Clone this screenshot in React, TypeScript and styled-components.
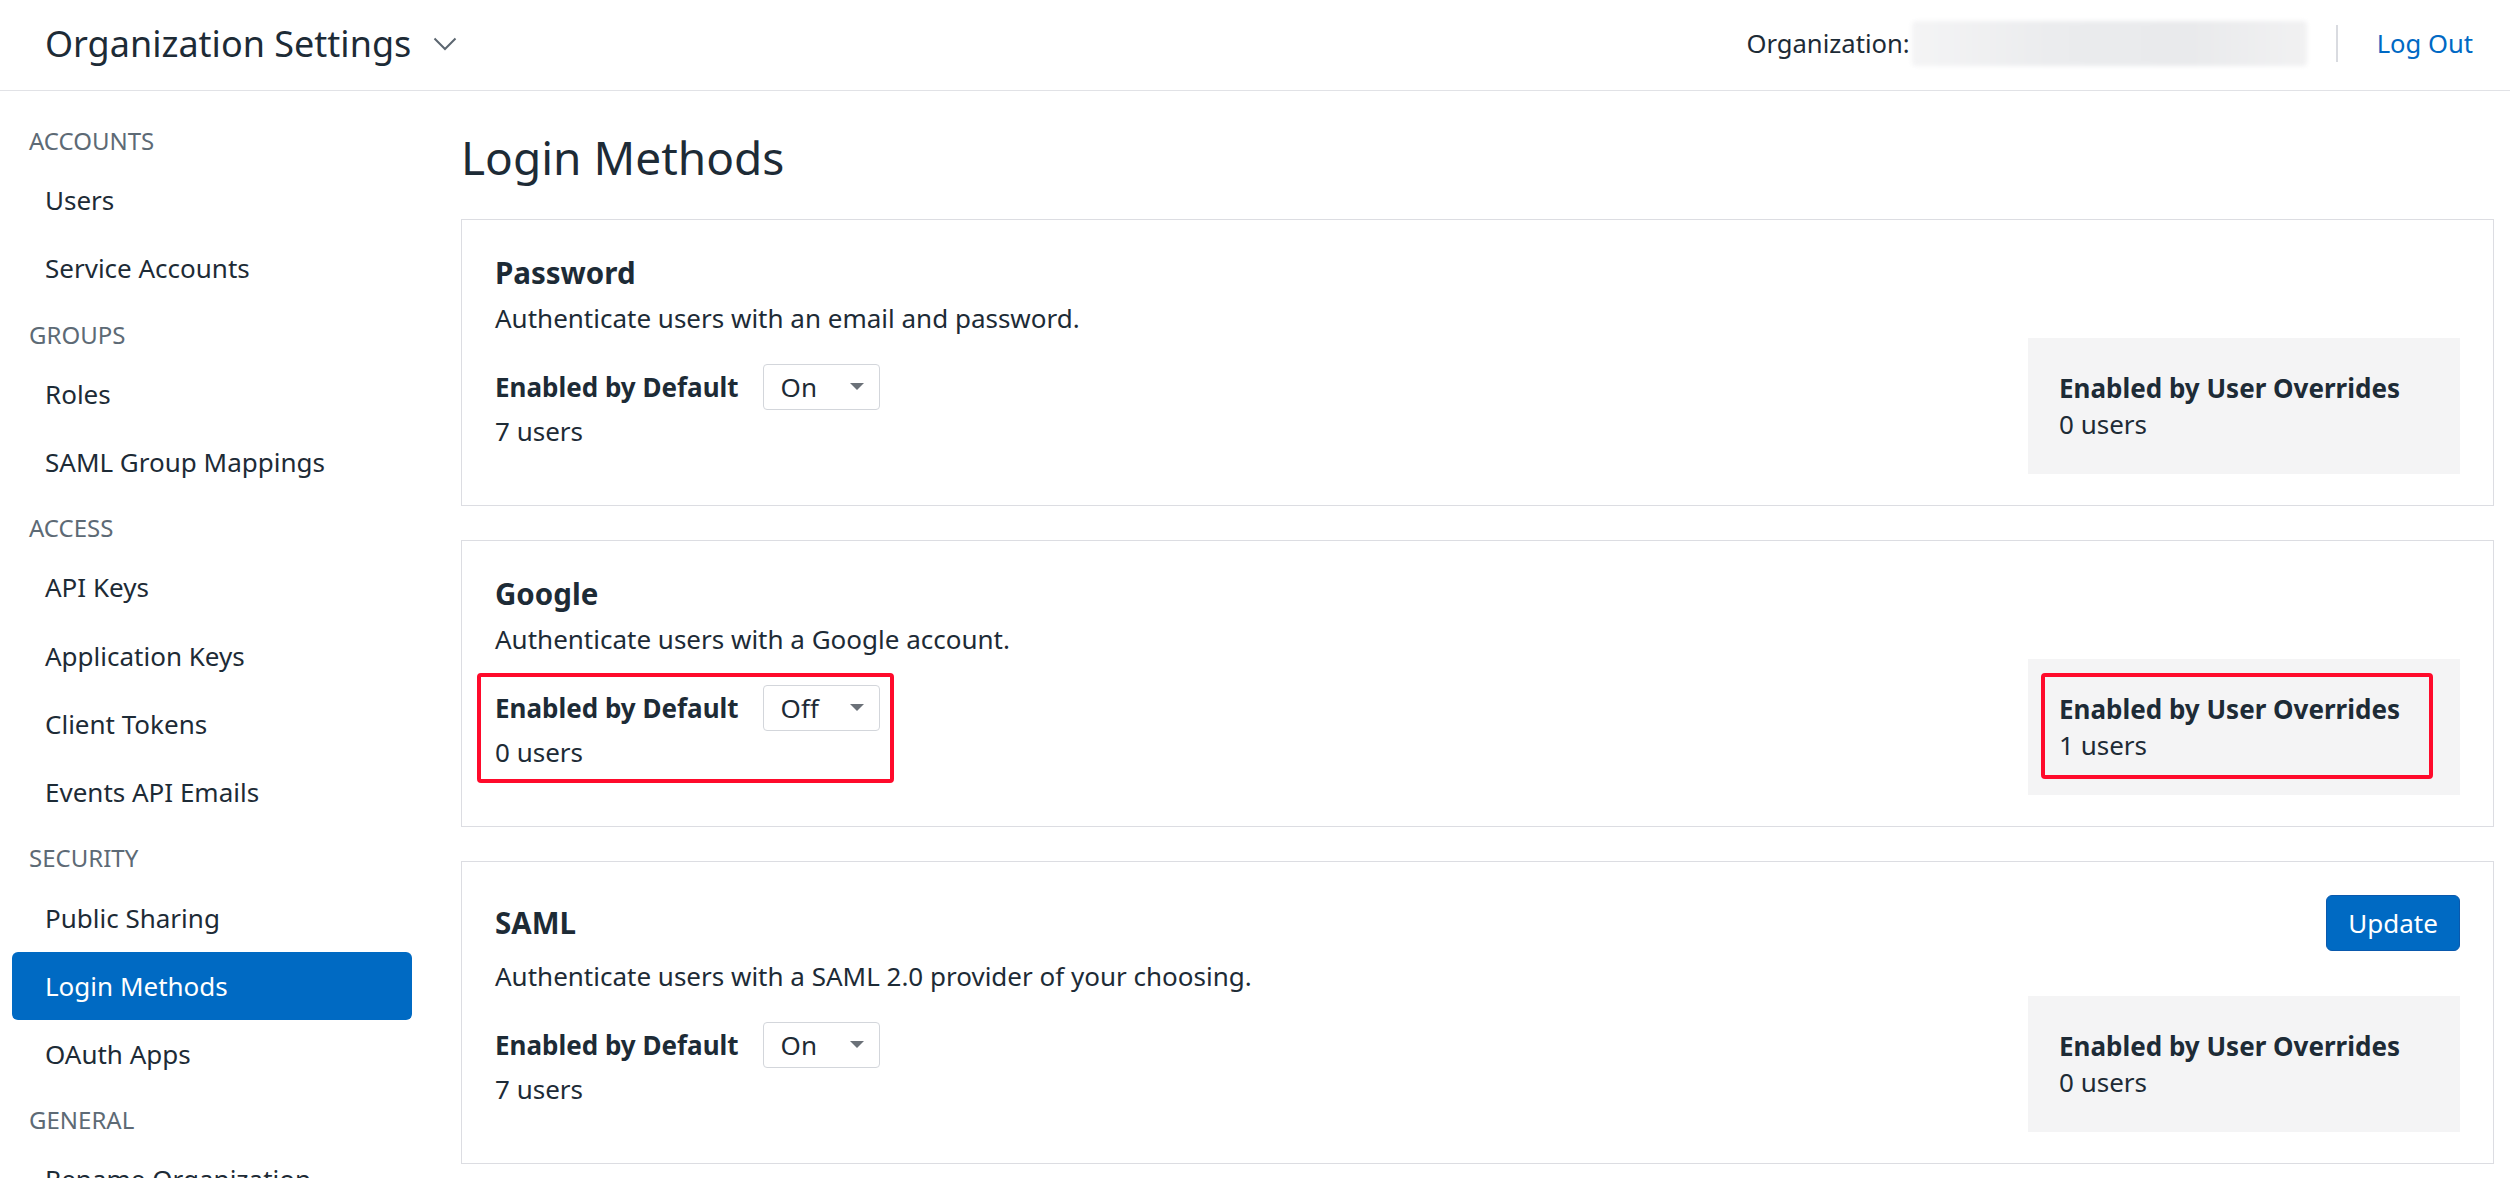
import styled, { createGlobalStyle, css } from 'styled-components';

const GlobalStyle = createGlobalStyle`
  html, body {
    margin: 0;
    padding: 0;
  }
  body {
    font-family: 'Noto Sans', 'Open Sans', sans-serif;
    color: #1d2b36;
    background: #ffffff;
    overflow: hidden;
  }
  * {
    box-sizing: border-box;
  }
`;

const Page = styled.div`
  width: 2510px;
  height: 1178px;
  display: flex;
  flex-direction: column;
  overflow: hidden;
`;

const TopBar = styled.header`
  flex: none;
  height: 91px;
  display: flex;
  align-items: center;
  justify-content: space-between;
  padding: 0 37px 3px 45px;
  border-bottom: 1px solid #e1e2e6;
`;

const AppTitle = styled.div`
  display: flex;
  align-items: center;
  gap: 22px;
  font-size: 36px;
  line-height: 48px;
`;

const OrgInfo = styled.div`
  display: flex;
  align-items: center;
  font-size: 25.6px;
  line-height: 36px;
`;

const Redacted = styled.div`
  width: 395px;
  height: 45px;
  margin-left: 2px;
  border-radius: 4px;
  background: linear-gradient(90deg, #f4f4f5 0%, #ebecee 35%, #e9eaec 70%, #f1f1f2 100%);
  filter: blur(2px);
`;

const Divider = styled.div`
  width: 2px;
  height: 37px;
  margin: 0 39px 0 29px;
  background: #d9dbe0;
`;

const LogOut = styled.a`
  color: #0069c4;
  text-decoration: none;
`;

const Body = styled.div`
  flex: 1;
  display: flex;
  min-height: 0;
`;

const Sidebar = styled.nav`
  flex: none;
  width: 424px;
  padding: 18px 12px 0;
`;

const SectionLabel = styled.div`
  padding: 17px 0 10px 17px;
  font-size: 24px;
  line-height: 30px;
  color: #5d6a75;
  text-transform: uppercase;
`;

const NavItem = styled.div<{ $active?: boolean }>`
  height: 68.3px;
  display: flex;
  align-items: center;
  padding-left: 33px;
  font-size: 26px;
  border-radius: 6px;
  ${(p) =>
    p.$active &&
    css`
      background: #006ac3;
      color: #ffffff;
    `}
`;

const Main = styled.main`
  flex: 1;
  padding: 40px 16px 0 37px;
`;

const PageTitle = styled.h1`
  margin: 0 0 36px;
  font-size: 46px;
  line-height: 52px;
  font-weight: 400;
`;

const CardList = styled.div`
  display: flex;
  flex-direction: column;
  gap: 34px;
`;

const Card = styled.section`
  border: 1px solid #dcdde2;
  padding: 33px 33px 31px 33px;
`;

const CardHead = styled.div`
  display: flex;
  align-items: center;
  justify-content: space-between;
  margin-bottom: 7px;
`;

const CardTitle = styled.h2`
  margin: 0;
  font-size: 29.5px;
  line-height: 40px;
  font-weight: 700;
`;

const Description = styled.div`
  margin-bottom: 2px;
  font-size: 26px;
  line-height: 36px;
`;

const CardBody = styled.div`
  display: flex;
  align-items: center;
  justify-content: space-between;
`;

const highlight = css<{ $inset: string }>`
  &::after {
    content: '';
    position: absolute;
    inset: ${(p) => p.$inset};
    border: 4px solid #ff0a2b;
    border-radius: 4px;
  }
`;

const DefaultBlock = styled.div<{ $highlight?: boolean; $inset: string }>`
  position: relative;
  font-size: 26px;
  line-height: 36px;
  ${(p) => p.$highlight && highlight}
`;

const SettingRow = styled.div`
  display: flex;
  align-items: center;
  gap: 24px;
  margin-bottom: 3px;
`;

const Label = styled.div`
  font-weight: 700;
`;

const Select = styled.div`
  width: 117px;
  height: 46px;
  display: flex;
  align-items: center;
  justify-content: space-between;
  padding: 0 15px 0 17px;
  border: 1px solid #d3d6db;
  border-radius: 4px;
`;

const Caret = styled.span`
  width: 0;
  height: 0;
  border-left: 7px solid transparent;
  border-right: 7px solid transparent;
  border-top: 7px solid #6b7178;
`;

const OverrideBox = styled.div<{ $highlight?: boolean; $inset: string }>`
  position: relative;
  width: 432px;
  height: 136px;
  display: flex;
  flex-direction: column;
  justify-content: center;
  padding: 0 31px;
  background: #f4f4f5;
  font-size: 26px;
  line-height: 36px;
  ${(p) => p.$highlight && highlight}
`;

const UpdateButton = styled.button`
  width: 134px;
  height: 56px;
  border: 1px solid #0a59ad;
  border-radius: 6px;
  background: #006ac3;
  color: #ffffff;
  font-family: inherit;
  font-size: 26px;
`;

const ChevronDown = () => (
  <svg width="24" height="14" viewBox="0 0 24 14" fill="none">
    <polyline points="1.5,1.5 12,12 22.5,1.5" stroke="#5c6670" strokeWidth="2" />
  </svg>
);

type Section = { label: string; items: string[] };

const sections: Section[] = [
  { label: 'Accounts', items: ['Users', 'Service Accounts'] },
  { label: 'Groups', items: ['Roles', 'SAML Group Mappings'] },
  { label: 'Access', items: ['API Keys', 'Application Keys', 'Client Tokens', 'Events API Emails'] },
  { label: 'Security', items: ['Public Sharing', 'Login Methods', 'OAuth Apps'] },
  { label: 'General', items: ['Rename Organization'] },
];

type Method = {
  name: string;
  description: string;
  value: 'On' | 'Off';
  defaultUsers: number;
  overrideUsers: number;
  highlight?: boolean;
  action?: string;
};

const methods: Method[] = [
  {
    name: 'Password',
    description: 'Authenticate users with an email and password.',
    value: 'On',
    defaultUsers: 7,
    overrideUsers: 0,
  },
  {
    name: 'Google',
    description: 'Authenticate users with a Google account.',
    value: 'Off',
    defaultUsers: 0,
    overrideUsers: 1,
    highlight: true,
  },
  {
    name: 'SAML',
    description: 'Authenticate users with a SAML 2.0 provider of your choosing.',
    value: 'On',
    defaultUsers: 7,
    overrideUsers: 0,
    action: 'Update',
  },
];

const MethodCard = ({ method }: { method: Method }) => (
  <Card>
    <CardHead>
      <CardTitle>{method.name}</CardTitle>
      {method.action && <UpdateButton>{method.action}</UpdateButton>}
    </CardHead>
    <Description>{method.description}</Description>
    <CardBody>
      <DefaultBlock $highlight={method.highlight} $inset="-12px -14px -13px -18px">
        <SettingRow>
          <Label>Enabled by Default</Label>
          <Select>
            <span>{method.value}</span>
            <Caret />
          </Select>
        </SettingRow>
        <div>{method.defaultUsers} users</div>
      </DefaultBlock>
      <OverrideBox $highlight={method.highlight} $inset="14px 27px 16px 13px">
        <Label>Enabled by User Overrides</Label>
        <div>{method.overrideUsers} users</div>
      </OverrideBox>
    </CardBody>
  </Card>
);

export default function App() {
  return (
    <Page>
      <GlobalStyle />
      <TopBar>
        <AppTitle>
          Organization Settings
          <ChevronDown />
        </AppTitle>
        <OrgInfo>
          Organization:
          <Redacted />
          <Divider />
          <LogOut href="#">Log Out</LogOut>
        </OrgInfo>
      </TopBar>
      <Body>
        <Sidebar>
          {sections.map((section) => (
            <div key={section.label}>
              <SectionLabel>{section.label}</SectionLabel>
              {section.items.map((item) => (
                <NavItem key={item} $active={item === 'Login Methods'}>
                  {item}
                </NavItem>
              ))}
            </div>
          ))}
        </Sidebar>
        <Main>
          <PageTitle>Login Methods</PageTitle>
          <CardList>
            {methods.map((m) => (
              <MethodCard key={m.name} method={m} />
            ))}
          </CardList>
        </Main>
      </Body>
    </Page>
  );
}
